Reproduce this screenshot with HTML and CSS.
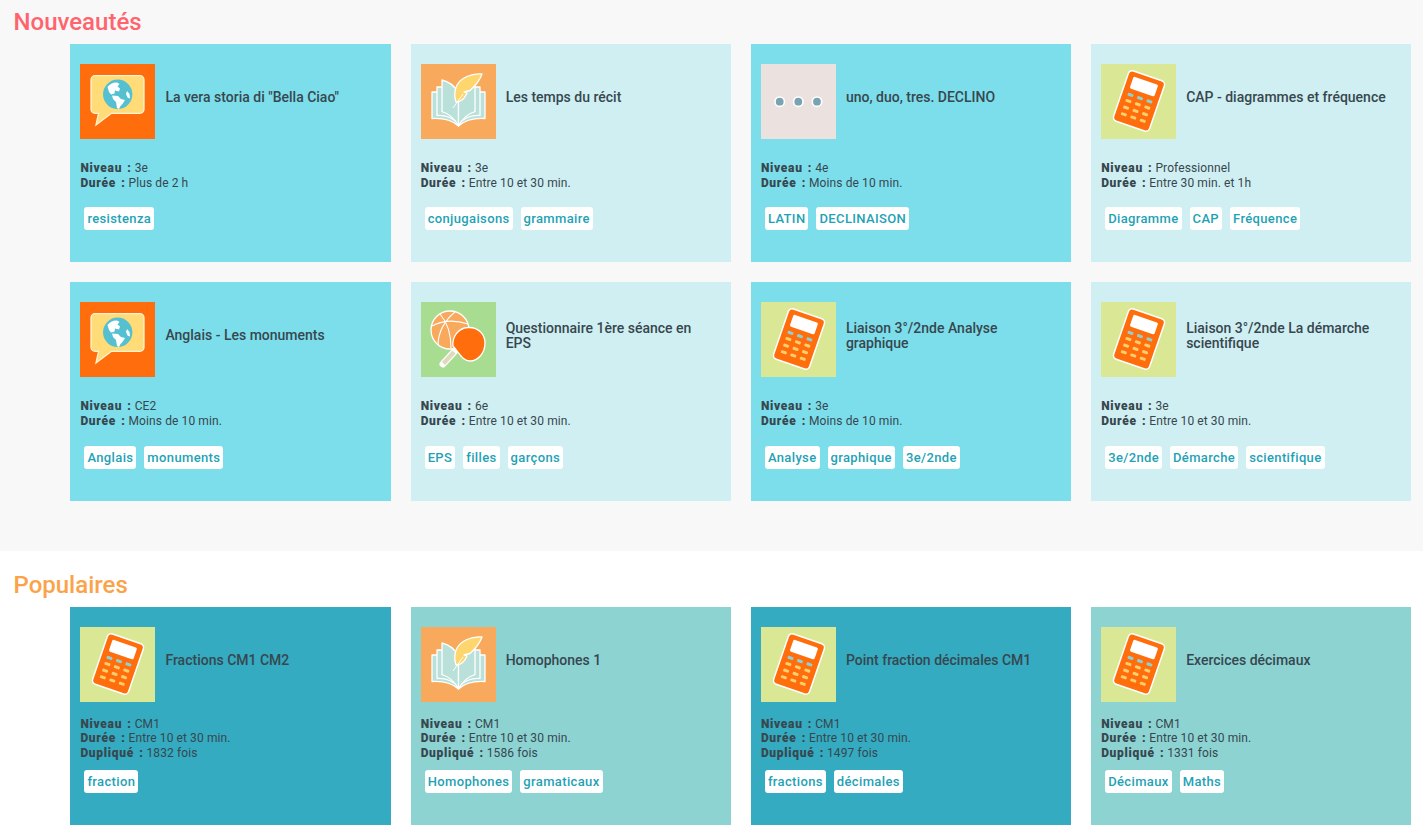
FILE: index.html
```html
<!DOCTYPE html>
<html lang="fr">
  <head>
    <meta charset="utf-8" />
    <title>Exercices</title>
    <link rel="stylesheet" href="styles.css">
  </head>
  <body>
    <svg class="icon-defs" width="0" height="0" aria-hidden="true">
      <symbol id="ico-langue" viewBox="0 0 75 75">
        <path d="M15 11.700H60A4 4 0 0 1 64 15.700V45.300A4 4 0 0 1 60 49.300H31.500L16 61L18.500 49.300H15A4 4 0 0 1 11 45.300V15.700A4 4 0 0 1 15 11.700Z" fill="#ffdc78" stroke="#fff3d6" stroke-width="1.300" />
        <circle cx="37.700" cy="30.300" r="14.700" fill="#55c1d0" />
        <path d="M27.500 23C29.500 20 34 18 37 18.500L39.500 20L37.500 22.500L40 24.500L39 27.500L35 26.500L34.500 29.500L31 30.500L29 28Z" fill="#fff" />
        <path d="M32 31.500L38 32L41 35L45 36L42.500 40L40.500 42L39 45L37 44L36 38L33 35Z" fill="#fff" />
        <path d="M47 27L49.500 30L50 34.500L47.500 33.500L46 30Z" fill="#fff" />
      </symbol>
      <symbol id="ico-livre" viewBox="0 0 75 75">
        <g fill="#b9e0d9" stroke="#fff" stroke-width="1.300" stroke-linejoin="round">
          <path d="M37.500 62C31 56 21 54 11 54.500V28H17V50H37.500Z" />
          <path d="M37.500 62C44 56 54 54 64 54.500V28H58V50H37.500Z" />
          <path d="M37.500 60C32 54 25 51 16 51.500V23H22V48H37.500Z" />
          <path d="M37.500 60C43 54 50 51 59 51.500V23H53V48H37.500Z" />
          <path d="M37.500 62C34 55 29 50 21 47.500V16C29 18 34 22 37.500 29Z" />
          <path d="M37.500 62C41 55 46 50 54 47.500V21C46 22 41 24 37.500 29Z" />
        </g>
        <path d="M61 10C50 9 40 14 36 21C33 27 33 32 35 38C40 38 44 34 46 29L43 28L49 26.500C54 22 59 16 61 10Z" fill="#ffd56e" stroke="#fff" stroke-width="1.300" stroke-linejoin="round" />
        <path d="M32 44L37 37L42 30" fill="none" stroke="#fff" stroke-width="1" />
      </symbol>
      <symbol id="ico-calc" viewBox="0 0 75 75">
        <g transform="rotate(19 38 37)">
          <rect x="19" y="10.500" width="38" height="53" rx="4" fill="#ff6d0c" stroke="#fff" stroke-width="1.500" />
          <rect x="25" y="15.500" width="26" height="12.500" rx="1.500" fill="#fff" />
          <g fill="#8fd0d0">
            <rect x="25" y="32.500" width="6" height="3" rx="1" />
            <rect x="35" y="32.500" width="6" height="3" rx="1" />
            <rect x="45" y="32.500" width="6" height="3" rx="1" />
          </g>
          <g fill="#ffcf6b">
            <rect x="25" y="39" width="6" height="3" rx="1" />
            <rect x="35" y="39" width="6" height="3" rx="1" />
            <rect x="45" y="39" width="6" height="3" rx="1" />
            <rect x="25" y="46" width="6" height="3" rx="1" />
            <rect x="35" y="46" width="6" height="3" rx="1" />
            <rect x="45" y="46" width="6" height="3" rx="1" />
            <rect x="25" y="53" width="6" height="3" rx="1" />
            <rect x="35" y="53" width="6" height="3" rx="1" />
            <rect x="45" y="53" width="6" height="3" rx="1" />
          </g>
        </g>
      </symbol>
      <symbol id="ico-sport" viewBox="0 0 75 75">
        <circle cx="29" cy="28" r="19" fill="#f8a95c" stroke="#fff" stroke-width="1.300" />
        <path d="M11 24C22 18 35 18 47 22M19 12C26 20 30 32 30 46M34 10C24 18 17 30 17 43" fill="none" stroke="#fff" stroke-width="1.100" />
        <path d="M22 62L33 50" stroke="#fff" stroke-width="7" stroke-linecap="round" />
        <path d="M22.500 61.500L33 50" stroke="#e0dabd" stroke-width="4.500" />
        <path d="M32 44C31 35 37 26 47 25.500C58 25 64 33 64 41C64 51 57 59 49 59C42 59 39 52 32 44Z" fill="#ff6d0c" stroke="#fff" stroke-width="1.300" />
      </symbol>
      <symbol id="ico-autre" viewBox="0 0 75 75">
        <g fill="#7aa3b1" stroke="#fff" stroke-width="1.600">
          <circle cx="18.700" cy="37.700" r="4.700" />
          <circle cx="37.300" cy="37.700" r="4.700" />
          <circle cx="56" cy="37.700" r="4.700" />
        </g>
      </symbol>
    </svg>

    <section class="bloc bloc-new">
      <h2 class="bloc-titre titre-new">Nouveautés</h2>
      <div class="grille">
        <div class="carte">
          <div class="carte-tete">
            <svg class="vignette bg-orange"><use href="#ico-langue" /></svg>
            <h3>La vera storia di "Bella Ciao"</h3>
          </div>
          <div class="infos">
            <div><b>Niveau :</b> 3e</div>
            <div><b>Durée :</b> Plus de 2 h</div>
          </div>
          <div class="tags"><span>resistenza</span></div>
        </div>
        <div class="carte">
          <div class="carte-tete">
            <svg class="vignette bg-abricot"><use href="#ico-livre" /></svg>
            <h3>Les temps du récit</h3>
          </div>
          <div class="infos">
            <div><b>Niveau :</b> 3e</div>
            <div><b>Durée :</b> Entre 10 et 30 min.</div>
          </div>
          <div class="tags"><span>conjugaisons</span><span>grammaire</span></div>
        </div>
        <div class="carte">
          <div class="carte-tete">
            <svg class="vignette bg-rose"><use href="#ico-autre" /></svg>
            <h3>uno, duo, tres. DECLINO</h3>
          </div>
          <div class="infos">
            <div><b>Niveau :</b> 4e</div>
            <div><b>Durée :</b> Moins de 10 min.</div>
          </div>
          <div class="tags"><span>LATIN</span><span>DECLINAISON</span></div>
        </div>
        <div class="carte">
          <div class="carte-tete">
            <svg class="vignette bg-anis"><use href="#ico-calc" /></svg>
            <h3>CAP - diagrammes et fréquence</h3>
          </div>
          <div class="infos">
            <div><b>Niveau :</b> Professionnel</div>
            <div><b>Durée :</b> Entre 30 min. et 1h</div>
          </div>
          <div class="tags"><span>Diagramme</span><span>CAP</span><span>Fréquence</span></div>
        </div>
        <div class="carte">
          <div class="carte-tete">
            <svg class="vignette bg-orange"><use href="#ico-langue" /></svg>
            <h3>Anglais - Les monuments</h3>
          </div>
          <div class="infos">
            <div><b>Niveau :</b> CE2</div>
            <div><b>Durée :</b> Moins de 10 min.</div>
          </div>
          <div class="tags"><span>Anglais</span><span>monuments</span></div>
        </div>
        <div class="carte">
          <div class="carte-tete">
            <svg class="vignette bg-vert"><use href="#ico-sport" /></svg>
            <h3>Questionnaire 1ère séance en EPS</h3>
          </div>
          <div class="infos">
            <div><b>Niveau :</b> 6e</div>
            <div><b>Durée :</b> Entre 10 et 30 min.</div>
          </div>
          <div class="tags"><span>EPS</span><span>filles</span><span>garçons</span></div>
        </div>
        <div class="carte">
          <div class="carte-tete">
            <svg class="vignette bg-anis"><use href="#ico-calc" /></svg>
            <h3>Liaison 3°/2nde Analyse graphique</h3>
          </div>
          <div class="infos">
            <div><b>Niveau :</b> 3e</div>
            <div><b>Durée :</b> Moins de 10 min.</div>
          </div>
          <div class="tags"><span>Analyse</span><span>graphique</span><span>3e/2nde</span></div>
        </div>
        <div class="carte">
          <div class="carte-tete">
            <svg class="vignette bg-anis"><use href="#ico-calc" /></svg>
            <h3>Liaison 3°/2nde La démarche scientifique</h3>
          </div>
          <div class="infos">
            <div><b>Niveau :</b> 3e</div>
            <div><b>Durée :</b> Entre 10 et 30 min.</div>
          </div>
          <div class="tags"><span>3e/2nde</span><span>Démarche</span><span>scientifique</span></div>
        </div>
      </div>
    </section>

    <section class="bloc bloc-pop">
      <h2 class="bloc-titre titre-pop">Populaires</h2>
      <div class="grille">
        <div class="carte">
          <div class="carte-tete">
            <svg class="vignette bg-anis"><use href="#ico-calc" /></svg>
            <h3>Fractions CM1 CM2</h3>
          </div>
          <div class="infos">
            <div><b>Niveau :</b> CM1</div>
            <div><b>Durée :</b> Entre 10 et 30 min.</div>
            <div><b>Dupliqué :</b> 1832 fois</div>
          </div>
          <div class="tags"><span>fraction</span></div>
        </div>
        <div class="carte">
          <div class="carte-tete">
            <svg class="vignette bg-abricot"><use href="#ico-livre" /></svg>
            <h3>Homophones 1</h3>
          </div>
          <div class="infos">
            <div><b>Niveau :</b> CM1</div>
            <div><b>Durée :</b> Entre 10 et 30 min.</div>
            <div><b>Dupliqué :</b> 1586 fois</div>
          </div>
          <div class="tags"><span>Homophones</span><span>gramaticaux</span></div>
        </div>
        <div class="carte">
          <div class="carte-tete">
            <svg class="vignette bg-anis"><use href="#ico-calc" /></svg>
            <h3>Point fraction décimales CM1</h3>
          </div>
          <div class="infos">
            <div><b>Niveau :</b> CM1</div>
            <div><b>Durée :</b> Entre 10 et 30 min.</div>
            <div><b>Dupliqué :</b> 1497 fois</div>
          </div>
          <div class="tags"><span>fractions</span><span>décimales</span></div>
        </div>
        <div class="carte">
          <div class="carte-tete">
            <svg class="vignette bg-anis"><use href="#ico-calc" /></svg>
            <h3>Exercices décimaux</h3>
          </div>
          <div class="infos">
            <div><b>Niveau :</b> CM1</div>
            <div><b>Durée :</b> Entre 10 et 30 min.</div>
            <div><b>Dupliqué :</b> 1331 fois</div>
          </div>
          <div class="tags"><span>Décimaux</span><span>Maths</span></div>
        </div>
      </div>
    </section>
  </body>
</html>
```

FILE: styles.css
```css
html,
body {
  margin: 0;
  background: #fff;
  font-family: Roboto, "Liberation Sans", sans-serif;
  color: #37474f;
}
.icon-defs {
  display: block;
  height: 0;
}
.bloc-new {
  background: #f8f8f8;
  padding-bottom: 50px;
}
.bloc-pop {
  padding-top: 12px;
}
.bloc-titre {
  margin: 0;
  padding-left: 13.500px;
  height: 44px;
  line-height: 44px;
  font-size: 24px;
  font-weight: 500;
}
.titre-new {
  color: #ff636e;
}
.titre-pop {
  color: #fba349;
}
.grille {
  display: grid;
  grid-template-columns: repeat(4, 320.25px);
  grid-auto-rows: 218.4px;
  gap: 20px;
  padding-left: 70.4px;
}
.bloc-new .carte:nth-child(odd) {
  background: #7cdeeb;
}
.bloc-new .carte:nth-child(even) {
  background: #d0eff2;
}
.bloc-pop .carte:nth-child(odd) {
  background: #34abc0;
}
.bloc-pop .carte:nth-child(even) {
  background: #8dd3d2;
}
.carte {
  padding: 20px 10px 0;
  box-sizing: border-box;
}
.carte-tete {
  display: flex;
  align-items: center;
  gap: 10px;
}
.carte-tete h3 {
  margin: 0 10px 8px 0;
  font-size: 14px;
  font-weight: 500;
  line-height: 15px;
}
.vignette {
  flex: none;
  width: 75px;
  height: 75px;
}
.bg-orange {
  background: #ff6d0c;
}
.bg-abricot {
  background: #f8a95c;
}
.bg-rose {
  background: #ebe2e0;
}
.bg-anis {
  background: #dae795;
}
.bg-vert {
  background: #a8dc90;
}
.infos {
  display: flex;
  flex-direction: column;
  justify-content: center;
  height: 57px;
  margin-top: 8px;
  font-size: 12px;
  line-height: 14.500px;
  letter-spacing: 0.1px;
}
.infos b {
  font-weight: 900;
  letter-spacing: 0.7px;
  word-spacing: 1.500px;
}
.tags {
  display: flex;
  gap: 8px;
  margin: 3.2px 0 0 4px;
}
.tags span {
  height: 23px;
  line-height: 23px;
  padding: 0 3px;
  background: #fff;
  border-radius: 3px;
  font-size: 13px;
  font-weight: 500;
  letter-spacing: 0.36px;
  color: #1fa2b5;
}
```
